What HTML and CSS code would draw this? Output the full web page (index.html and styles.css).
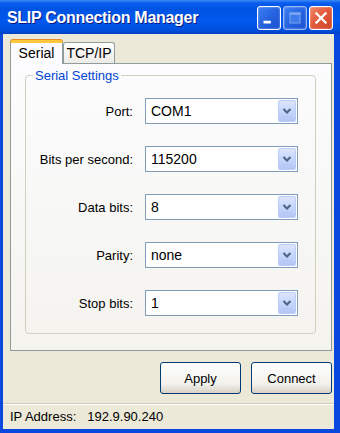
FILE: index.html
```html
<!DOCTYPE html>
<html>
<head>
<meta charset="utf-8">
<title>SLIP Connection Manager</title>
<link rel="stylesheet" href="styles.css">
</head>
<body>
	<div class="window">
		<div class="titlebar">
			<span class="title">SLIP Connection Manager</span>
			<div class="ctrls">
				<span class="cbtn"><svg width="24" height="24" viewBox="0 0 24 24"><rect x="6" y="15" width="8" height="3" fill="#fff"/></svg></span>
				<span class="cbtn dim"><svg width="24" height="24" viewBox="0 0 24 24"><rect x="6.5" y="6.5" width="11" height="11" fill="#3F7BEA" stroke="#7FA6F2" stroke-width="1"/><rect x="6" y="6" width="12" height="2.5" fill="#7FA6F2"/></svg></span>
				<span class="cbtn close"><svg width="24" height="24" viewBox="0 0 24 24"><path d="M7 7 L17 17 M17 7 L7 17" stroke="#fff" stroke-width="2.4" stroke-linecap="square"/></svg></span>
			</div>
		</div>
		<div class="client">
			<div class="tabs">
				<span class="tab active">Serial</span>
				<span class="tab">TCP/IP</span>
			</div>
			<div class="panel">
				<fieldset class="group">
					<legend>Serial Settings</legend>
					<div class="form">
						<label>Port:</label>
						<div class="combo"><span class="val">COM1</span><span class="drop"><svg width="10" height="8" viewBox="0 0 10 8"><path d="M1.5 2 L5 5.5 L8.5 2" fill="none" stroke="#4D6185" stroke-width="2"/></svg></span></div>
						<label>Bits per second:</label>
						<div class="combo"><span class="val">115200</span><span class="drop"><svg width="10" height="8" viewBox="0 0 10 8"><path d="M1.5 2 L5 5.5 L8.5 2" fill="none" stroke="#4D6185" stroke-width="2"/></svg></span></div>
						<label>Data bits:</label>
						<div class="combo"><span class="val">8</span><span class="drop"><svg width="10" height="8" viewBox="0 0 10 8"><path d="M1.5 2 L5 5.5 L8.5 2" fill="none" stroke="#4D6185" stroke-width="2"/></svg></span></div>
						<label>Parity:</label>
						<div class="combo"><span class="val">none</span><span class="drop"><svg width="10" height="8" viewBox="0 0 10 8"><path d="M1.5 2 L5 5.5 L8.5 2" fill="none" stroke="#4D6185" stroke-width="2"/></svg></span></div>
						<label>Stop bits:</label>
						<div class="combo"><span class="val">1</span><span class="drop"><svg width="10" height="8" viewBox="0 0 10 8"><path d="M1.5 2 L5 5.5 L8.5 2" fill="none" stroke="#4D6185" stroke-width="2"/></svg></span></div>
					</div>
				</fieldset>
			</div>
			<div class="actions">
				<button class="btn">Apply</button>
				<button class="btn">Connect</button>
			</div>
			<div class="status"><span class="key">IP Address:</span>192.9.90.240</div>
		</div>
	</div>
</body>
</html>
```

FILE: styles.css
```css
* { margin: 0; padding: 0; box-sizing: border-box; }
body { font-family: "Liberation Sans", Arial, sans-serif; font-size: 13px; color: #000; background: #fff; }

.window { width: 340px; height: 433px; display: flex; flex-direction: column; background: #0A47DE; }

/* title bar */
.titlebar { height: 34px; flex: none; display: flex; align-items: center; padding: 0 7px 0 7px;
	background: linear-gradient(#3A8CF6 0, #0A5BEF 3px, #0054E3 9px, #0058EE 60%, #0050DF 88%, #0040C4 100%); }
.title { flex: 1; color: #fff; font-weight: bold; font-size: 16px; letter-spacing: -0.3px; text-shadow: 1px 1px 0 #0A1883; padding-top: 1px; }
.ctrls { display: flex; gap: 2px; margin-top: 2px; }
.cbtn { width: 24px; height: 24px; border: 1px solid #fff; border-radius: 3px; display: flex; align-items: center; justify-content: center; overflow: hidden;
	background: linear-gradient(135deg, #3C80F4 0, #2663E0 50%, #1B50D0 100%); box-shadow: inset 0 0 2px rgba(255,255,255,0.6); }
.cbtn svg { display: block; }
.cbtn.dim { border-color: #9DB9F3; }
.cbtn.close { background: linear-gradient(135deg, #F08466 0, #E2583A 50%, #CC4426 100%); }

/* client area */
.client { flex: 1; display: flex; flex-direction: column; background: #ECE9D8; margin: 0 6px 4px 3px; }

.tabs { display: flex; align-items: flex-end; padding: 6px 0 0 7px; height: 29px; position: relative; z-index: 1; }
.tab { height: 21px; width: 52px; text-align: center; line-height: 20px; font-size: 14px; border: 1px solid #919B9C; border-bottom: none; border-radius: 3px 3px 0 0;
	background: linear-gradient(#FFFFFF, #ECEBE6); }
.tab.active { height: 24px; width: 53px; line-height: 21px; border-top: 3px solid #FFC83C; background: #FCFCFE; margin-bottom: -1px; box-shadow: 0 -1px 0 #E68B2C; }

.panel { height: 288px; margin: 0 2px 0 7px; border: 1px solid #919B9C; padding: 4px 15px 0 14px;
	background: linear-gradient(#FCFCFE, #F4F3EE); }

.group { height: 266px; border: 1px solid #D0D0BF; border-radius: 4px; padding: 15px 16px 0 0; }
.group legend { margin-left: 7px; padding: 0 2px; color: #0046D5; font-size: 13px; line-height: 15px; }

.form { display: grid; grid-template-columns: 107px 153px; column-gap: 12px; row-gap: 22px; align-items: center; }
.form label { text-align: right; }

.combo { height: 26px; border: 1px solid #7F9DB9; background: #fff; display: flex; align-items: center; padding: 1px 1px 1px 5px; }
.combo .val { flex: 1; font-size: 14px; }
.drop { width: 18px; height: 22px; border-radius: 2px; border: 1px solid #BACCF6; display: flex; align-items: center; justify-content: center;
	background: linear-gradient(#DCE6FD, #C1D3FB 60%, #B3C7F6); }

.actions { display: flex; justify-content: flex-end; gap: 10px; margin: 11px 2px 0 0; }
.btn { width: 81px; height: 32px; border: 1px solid #003C74; border-radius: 3px; font-family: inherit; font-size: 13px; color: #000;
	background: linear-gradient(#FFFFFF, #F2F1EC 70%, #D6D0C5); }

.status { margin-top: auto; height: 26px; line-height: 25px; padding-left: 7px; border-top: 1px solid #CFCBB8; box-shadow: inset 0 1px 0 #fff; }
.status .key { margin-right: 11px; }
```
